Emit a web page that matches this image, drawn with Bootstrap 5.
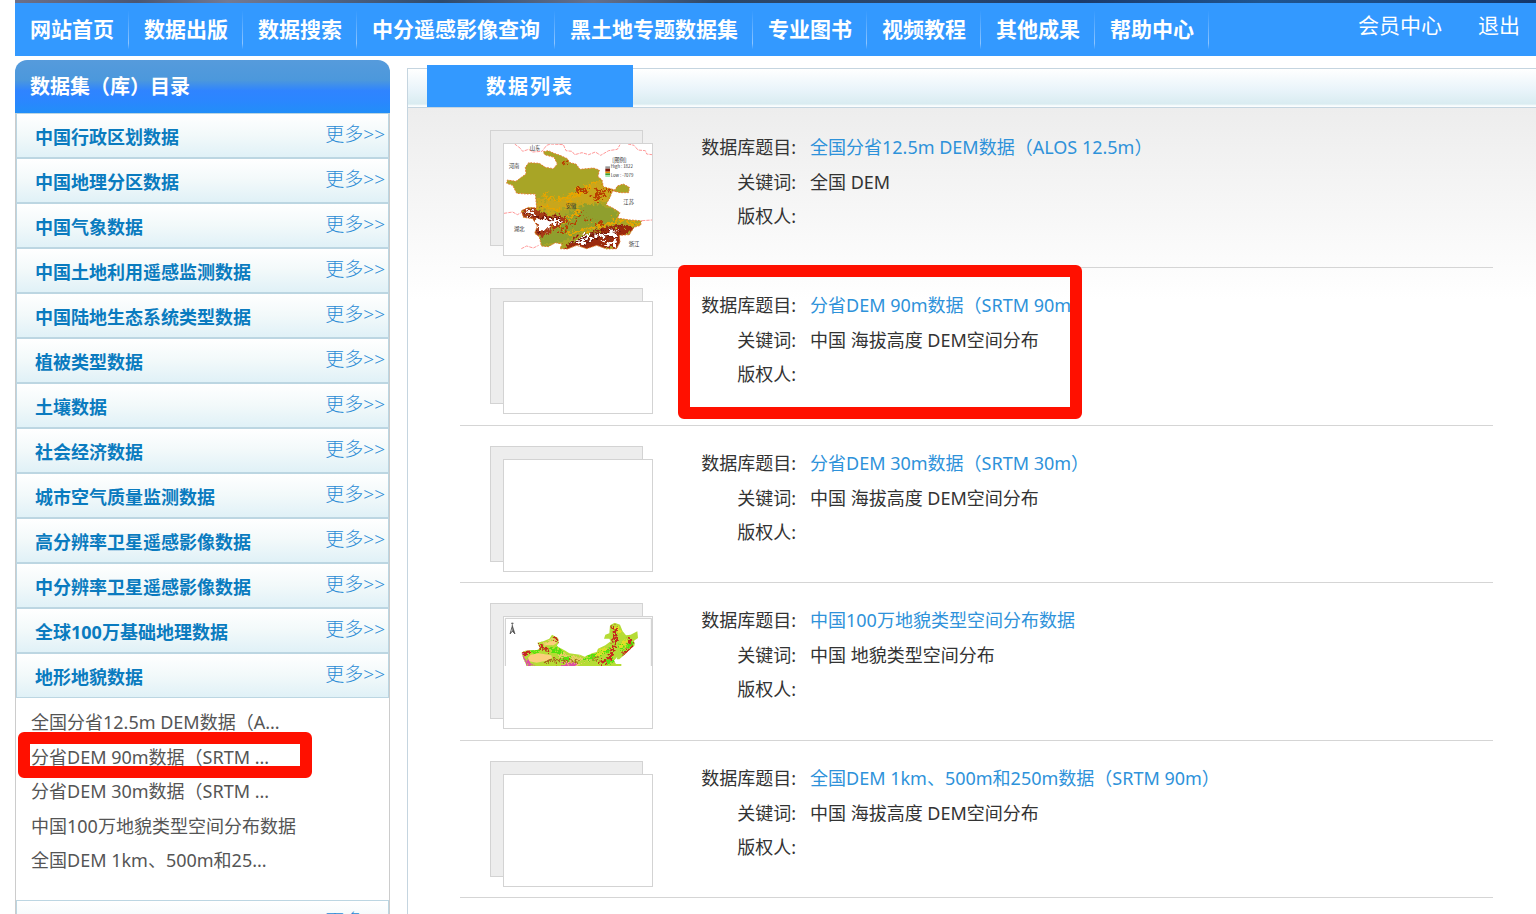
<!DOCTYPE html>
<html lang="zh-CN">
<head>
<meta charset="utf-8">
<meta name="viewport" content="width=device-width, initial-scale=1">
<title>数据列表</title>
<link href="https://cdn.jsdelivr.net/npm/bootstrap@5.3.0/dist/css/bootstrap.min.css" rel="stylesheet">
<style>
  body { font-family: "Noto Sans", "Noto Sans CJK SC", sans-serif; font-size: 18px; color: #333; background: #fff; }
  a { text-decoration: none; }
  .page { padding-left: 15px; }
  .banner { height: 3px; background: linear-gradient(90deg, #6d7089, #4a5672 8%, #747a92 14%, #2d4a6d 28%, #66718c 38%, #2c4768 46%, #28456d 62%, #1b3a6b 70%, #1f5590 82%, #1c4c86 90%, #14366a); }
  .topbar { height: 53px; background: #39f; font-size: 21px; line-height: 53px; }
  .topbar a { color: #fff; white-space: nowrap; }
  .main-menu a { display: block; font-weight: 700; padding: 0 14px 0 15px; border-right: 1px solid; border-image: linear-gradient(#39f 15%, #8ec5ff 75%, #39f 86%) 1; }
  .user-menu { gap: 36px; line-height: 45px; padding-right: 16px; }

  .catalog { width: 375px; margin-top: 4px; }
  .catalog-title { height: 53px; line-height: 54px; margin: 0; padding-left: 15px; font-size: 20px; font-weight: 700; color: #fff; border-radius: 12px 12px 0 0; background: linear-gradient(#569bdc, #4c98dc 38%, #2f84ff 58%, #2b86ff 75%, #228ef8); }
  .catalog-body { border: 1px solid #ccc; border-width: 0 1px; }
  .group { height: 45px; padding: 0 3px 0 18px; border: 1px solid #bcd6e2; background: linear-gradient(#fff, #f2f9fa 50%, #e0f1f7); }
  .group h3 { margin: 0; font-size: 18px; line-height: 46px; font-weight: 700; color: #0a7bbf; }
  .group a { font-size: 19px; line-height: 40px; font-weight: 300; color: #2a8bd5; }
  .sublist { padding: 7px 14px 22px 15px; }
  .sublist li { position: relative; line-height: 34px; }
  .sublist li:nth-child(odd) { line-height: 35px; }
  .sublist a { color: #555; }

  .content { margin: 12px 0 0 17px; border: 1px solid #c5d5e0; border-width: 1px 0 0 1px; }
  .content-head { height: 39px; padding-left: 19px; border-bottom: 1px solid #c5d5e0; background: linear-gradient(#fff, #e9f4fa 55%, #d9ecf1 92%, #fafdfe 97%); }
  .tab-title { width: 206px; height: 42px; margin: -4px 0 0; line-height: 44px; font-size: 20px; font-weight: 700; color: #fff; background: #39f; letter-spacing: 2px; }
  .records { padding: 2px 43px 0 52px; background: linear-gradient(#ededed, #fff 192px); }
  .record { position: relative; height: 158px; padding: 20px 30px 0; border-bottom: 1px solid #d5d5d5; }
  .record:nth-child(odd) { height: 157px; }
  .record:first-child { height: 158px; }
  .thumb { width: 153px; height: 116px; border: 1px solid #d3d3d3; background: #ededed; padding: 12px 0 0 12px; }
  .thumb-front { width: 150px; height: 113px; border: 1px solid #d3d3d3; background: #fff; }
  .thumb-front svg { display: block; width: 100%; height: 100%; }
  .fields { margin: 0 0 0 58px; }
  .fields > div { gap: 14px; line-height: 34px; }
  .fields > div:first-child { line-height: 35px; }
  .fields dt { width: 95px; font-weight: 400; text-align: right; white-space: nowrap; }
  .fields dd { margin: 0; }
  .fields a { color: #2e92da; }

  .frame { position: absolute; border: 12px solid #ff1000; border-radius: 6px; pointer-events: none; z-index: 2; }
  .frame-record { left: 218px; top: -3px; width: 404px; height: 154px; }
  .frame-link { left: -13px; top: -8px; width: 294px; height: 46px; }
</style>
</head>
<body class="vh-100 overflow-hidden">
<div class="page vh-100 d-flex flex-column">
  <div class="banner flex-shrink-0"></div>
  <nav class="topbar d-flex flex-shrink-0 justify-content-between" aria-label="主导航">
    <ul class="main-menu list-unstyled d-flex mb-0">
      <li><a href="#">网站首页</a></li>
      <li><a href="#">数据出版</a></li>
      <li><a href="#">数据搜索</a></li>
      <li><a href="#">中分遥感影像查询</a></li>
      <li><a href="#">黑土地专题数据集</a></li>
      <li><a href="#">专业图书</a></li>
      <li><a href="#">视频教程</a></li>
      <li><a href="#">其他成果</a></li>
      <li><a href="#">帮助中心</a></li>
    </ul>
    <div class="user-menu d-flex"><a href="#">会员中心</a><a href="#">退出</a></div>
  </nav>

  <div class="d-flex flex-grow-1">
    <aside class="catalog flex-shrink-0">
      <h2 class="catalog-title">数据集（库）目录</h2>
      <div class="catalog-body">
        <div class="group d-flex justify-content-between"><h3>中国行政区划数据</h3><a href="#">更多&gt;&gt;</a></div>
        <div class="group d-flex justify-content-between"><h3>中国地理分区数据</h3><a href="#">更多&gt;&gt;</a></div>
        <div class="group d-flex justify-content-between"><h3>中国气象数据</h3><a href="#">更多&gt;&gt;</a></div>
        <div class="group d-flex justify-content-between"><h3>中国土地利用遥感监测数据</h3><a href="#">更多&gt;&gt;</a></div>
        <div class="group d-flex justify-content-between"><h3>中国陆地生态系统类型数据</h3><a href="#">更多&gt;&gt;</a></div>
        <div class="group d-flex justify-content-between"><h3>植被类型数据</h3><a href="#">更多&gt;&gt;</a></div>
        <div class="group d-flex justify-content-between"><h3>土壤数据</h3><a href="#">更多&gt;&gt;</a></div>
        <div class="group d-flex justify-content-between"><h3>社会经济数据</h3><a href="#">更多&gt;&gt;</a></div>
        <div class="group d-flex justify-content-between"><h3>城市空气质量监测数据</h3><a href="#">更多&gt;&gt;</a></div>
        <div class="group d-flex justify-content-between"><h3>高分辨率卫星遥感影像数据</h3><a href="#">更多&gt;&gt;</a></div>
        <div class="group d-flex justify-content-between"><h3>中分辨率卫星遥感影像数据</h3><a href="#">更多&gt;&gt;</a></div>
        <div class="group d-flex justify-content-between"><h3>全球100万基础地理数据</h3><a href="#">更多&gt;&gt;</a></div>
        <div class="group d-flex justify-content-between"><h3>地形地貌数据</h3><a href="#">更多&gt;&gt;</a></div>
        <ul class="sublist list-unstyled mb-0">
          <li><a href="#">全国分省12.5m DEM数据（A...</a></li>
          <li><a href="#">分省DEM 90m数据（SRTM ...</a><span class="frame frame-link"></span></li>
          <li><a href="#">分省DEM 30m数据（SRTM ...</a></li>
          <li><a href="#">中国100万地貌类型空间分布数据</a></li>
          <li><a href="#">全国DEM 1km、500m和25...</a></li>
        </ul>
        <div class="group d-flex justify-content-end"><a href="#">更多&gt;&gt;</a></div>
      </div>
    </aside>

    <main class="content flex-grow-1">
      <div class="content-head d-flex align-items-start"><h2 class="tab-title text-center">数据列表</h2></div>
      <div class="records">
        <article class="record d-flex">
          <div class="thumb flex-shrink-0"><div class="thumb-front">
            <svg viewBox="72 72 444 333" preserveAspectRatio="none" role="img" aria-label="安徽省高程图">
              <defs>
                <filter id="rough" x="-5%" y="-5%" width="110%" height="110%"><feTurbulence type="fractalNoise" baseFrequency=".09" numOctaves="3" seed="4"/><feDisplacementMap in="SourceGraphic" scale="40" xChannelSelector="R" yChannelSelector="G"/></filter>
                <clipPath id="prov"><path id="provShape" d="M190 95L205 92 222 100 240 106 262 116 270 128 288 132 300 148 340 144 358 150 354 170 366 180 370 200 405 210 412 198 430 192 448 202 446 218 420 218 398 212 390 232 378 254 402 266 420 278 412 294 450 300 484 302 482 316 462 322 448 344 418 346 420 366 410 386 380 387 350 376 320 386 290 376 262 387 240 386 246 372 226 368 205 380 184 378 178 350 164 340 172 318 158 296 130 292 124 272 146 262 170 264 166 222 140 222 110 220 98 196 80 190 82 180 108 184 124 172 138 162 136 142 146 128 178 130 196 142 220 146 232 132 222 112 194 104Z"/></clipPath>
              </defs>
              <g fill="none" stroke="#f99" stroke-width="3" stroke-dasharray="10 3">
                <path d="M104 72L120 84 128 94 146 88 158 96 186 94 200 76 212 72 250 74 258 92 276 94 284 104 306 98 326 104 346 96 362 106 386 92 412 88 420 74M444 72L462 76 474 90 496 92 500 102 516 104M72 280L98 276 112 284 128 276M124 386L140 378 160 384 176 376M486 302L516 300"/>
              </g>
              <g clip-path="url(#prov)">
                <path d="M72 72H516V405H72Z" fill="#a8a526"/>
                <g filter="url(#rough)">
                  <path d="M170 236L235 245 290 215 350 185 400 210 385 245 330 250 250 265 220 285 168 262Z" fill="#c9a61a"/>
                  <path d="M185 350L250 290 320 250 410 265 420 310 340 320 280 350 230 372 180 380Z" fill="#8f9f2e"/>
                  <path d="M190 228L240 240 300 212M260 250L350 180M180 258L240 268M395 300L480 310M200 340L260 300 300 270M260 342L340 322 410 308" fill="none" stroke="#e8a505" stroke-width="8"/>
                  <path d="M286 208L322 212M340 240L362 205M352 242L378 208M370 210L400 212M250 130L266 122M290 288L310 284M320 302L340 296M350 312L368 306M262 312L285 308M240 332L262 326" fill="none" stroke="#b93c05" stroke-width="8"/>
                  <path d="M118 262L160 262 200 284 262 290 240 316 205 342 176 356 150 326 164 300 126 292Z" fill="#a63a15"/>
                  <path d="M246 390L284 356 340 334 405 318 470 318 440 350 420 390Z" fill="#9b2c10"/>
                  <path d="M168 298L215 298 242 300 205 328 172 328ZM136 272L152 270 172 286 146 290ZM274 368L315 342 355 342 330 364 300 378ZM355 346L412 324 412 344 376 354ZM360 374L412 358 405 378Z" fill="#fff"/>
                  <path d="M140 280L180 292 240 298M164 332L190 334M265 372L340 342 420 330M310 372L350 352 410 350" fill="none" stroke="#6f1608" stroke-width="5"/>
                </g>
              </g>
              <use href="#provShape" fill="none" stroke="#e87a30" stroke-width="3" stroke-dasharray="5 4"/>
              <g font-size="16" fill="#333" font-family="Noto Sans CJK SC, sans-serif">
                <text x="149" y="89">山东</text><text x="86" y="145">河南</text><text x="430" y="251">江苏</text><text x="257" y="265">安徽</text><text x="102" y="334">湖北</text><text x="446" y="377">浙江</text>
                <text x="397" y="126">[图例]</text>
                <text x="392" y="143" font-size="13">High : 1822</text><text x="392" y="171" font-size="13">Low : -7079</text>
              </g>
              <path d="M376 139h14v7h-14z" fill="#999"/><path d="M376 146h14v9h-14z" fill="#7c1808"/><path d="M376 155h14v5h-14z" fill="#f09500"/><path d="M376 160h14v6h-14z" fill="#3b9d30"/><path d="M376 166h14v5h-14z" fill="#9fe9b2"/>
            </svg>
          </div></div>
          <dl class="fields">
            <div class="d-flex"><dt>数据库题目:</dt><dd><a href="#">全国分省12.5m DEM数据（ALOS 12.5m）</a></dd></div>
            <div class="d-flex"><dt>关键词:</dt><dd>全国 DEM</dd></div>
            <div class="d-flex"><dt>版权人:</dt><dd></dd></div>
          </dl>
        </article>
        <article class="record d-flex">
          <div class="thumb flex-shrink-0"><div class="thumb-front"></div></div>
          <dl class="fields">
            <div class="d-flex"><dt>数据库题目:</dt><dd><a href="#">分省DEM 90m数据（SRTM 90m）</a></dd></div>
            <div class="d-flex"><dt>关键词:</dt><dd>中国 海拔高度 DEM空间分布</dd></div>
            <div class="d-flex"><dt>版权人:</dt><dd></dd></div>
          </dl>
          <span class="frame frame-record"></span>
        </article>
        <article class="record d-flex">
          <div class="thumb flex-shrink-0"><div class="thumb-front"></div></div>
          <dl class="fields">
            <div class="d-flex"><dt>数据库题目:</dt><dd><a href="#">分省DEM 30m数据（SRTM 30m）</a></dd></div>
            <div class="d-flex"><dt>关键词:</dt><dd>中国 海拔高度 DEM空间分布</dd></div>
            <div class="d-flex"><dt>版权人:</dt><dd></dd></div>
          </dl>
        </article>
        <article class="record d-flex">
          <div class="thumb flex-shrink-0"><div class="thumb-front">
            <svg viewBox="72 81 444 333" preserveAspectRatio="none" role="img" aria-label="中国地貌类型图">
              <defs>
                <filter id="rough2" x="-5%" y="-5%" width="110%" height="110%"><feTurbulence type="fractalNoise" baseFrequency=".12" numOctaves="3" seed="9"/><feDisplacementMap in="SourceGraphic" scale="32" xChannelSelector="R" yChannelSelector="G"/></filter>
                <clipPath id="north"><path d="M124 188L136 182 172 180 180 174 172 158 190 154 208 146 216 134 234 144 236 158 230 168 256 182 268 190 300 194 314 200 336 190 350 186 354 176 376 166 392 154 388 146 372 146 376 134 388 130 390 106 404 98 420 104 428 124 438 136 452 134 472 124 474 144 462 152 464 166 446 182 436 192 418 208 410 208 412 200 402 212 408 222 424 222 424 228 140 228 132 210Z"/></clipPath>
              </defs>
              <path d="M76 228V85H514V228" fill="none" stroke="#ccc" stroke-width="3"/>
              <g clip-path="url(#north)">
                <path d="M72 81H516V228H72Z" fill="#b5dc35"/>
                <g filter="url(#rough2)" fill="none" stroke-width="10">
                  <path d="M190 160L230 150M236 196L330 210M250 220L300 222" stroke="#e8cd68"/>
                  <path d="M150 182L180 184M210 174L250 190M240 208L270 204M310 210L390 180M380 222L400 210M420 160L430 184M440 170L460 160" stroke="#52e20a"/>
                  <path d="M410 110L425 134M424 170L440 150M350 200L376 174" stroke="#e4de28"/>
                  <path d="M222 138L238 154M176 170L210 180M126 188L150 186M402 110L406 156 388 204 360 222M448 142L450 160M432 196L462 168" stroke="#c52c1d"/>
                  <path d="M128 194L142 220 160 228M250 224L290 228" stroke="#dc4fa4"/>
                  <path d="M190 214L240 210 290 216M288 208L298 210M340 208L352 204" stroke="#a8651d" stroke-width="6"/>
                </g>
                <path d="M144 204L152 194 176 190 214 196 216 204 198 212 170 218 148 214ZM194 162L218 152 232 158 220 166 198 166Z" fill="#fbcf7c"/>
              </g>
              <path d="M93 100h8M97 98v10M97 107L90 132 97 124 105 132Z" fill="#555" stroke="#444" stroke-width="2"/><path d="M97 113v9l-4 4z" fill="#fff"/>
            </svg>
          </div></div>
          <dl class="fields">
            <div class="d-flex"><dt>数据库题目:</dt><dd><a href="#">中国100万地貌类型空间分布数据</a></dd></div>
            <div class="d-flex"><dt>关键词:</dt><dd>中国 地貌类型空间分布</dd></div>
            <div class="d-flex"><dt>版权人:</dt><dd></dd></div>
          </dl>
        </article>
        <article class="record d-flex">
          <div class="thumb flex-shrink-0"><div class="thumb-front"></div></div>
          <dl class="fields">
            <div class="d-flex"><dt>数据库题目:</dt><dd><a href="#">全国DEM 1km、500m和250m数据（SRTM 90m）</a></dd></div>
            <div class="d-flex"><dt>关键词:</dt><dd>中国 海拔高度 DEM空间分布</dd></div>
            <div class="d-flex"><dt>版权人:</dt><dd></dd></div>
          </dl>
        </article>
      </div>
    </main>
  </div>
</div>
<script src="https://cdn.jsdelivr.net/npm/bootstrap@5.3.0/dist/js/bootstrap.bundle.min.js"></script>
</body>
</html>
